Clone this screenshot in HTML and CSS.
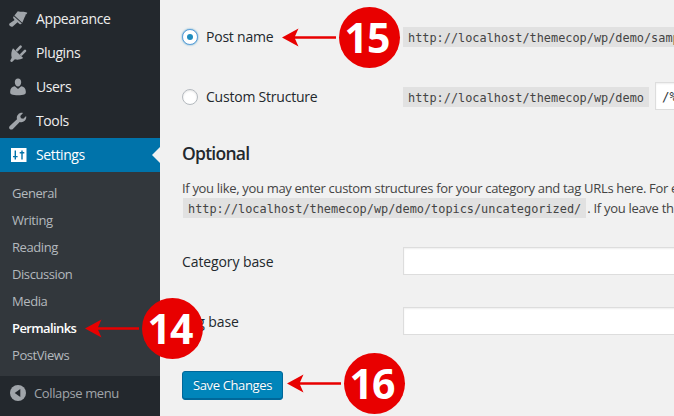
FILE: index.html
```html
<!DOCTYPE html>
<html lang="en">
<head>
<meta charset="utf-8">
<title>Permalink Settings</title>
<link rel="stylesheet" href="styles.css">
</head>
<body>
<div class="admin">
  <aside class="sidebar">
    <nav class="menu">
      <a class="item"><svg viewBox="0 0 20 20"><path d="M1.5 14.6 6.6 11 5.5 9.4c-.7-.9-.3-1.6.3-2.1l8 7.3c-.8.7-1.5.9-2.3.3l-2-1.6-4.7 4.1c-1.8 1.3-4.6-1.1-3.3-2.8z"/><path d="M6.4 6.4 9.8 2.2c3.1 1 6.1-.4 9.5 1.6-.3 1.1-.9 1.7-2 1.9.4.8.2 1.4-.5 2l-2.5 6z"/></svg><span>Appearance</span></a>
      <a class="item"><svg viewBox="0 0 20 20"><path d="M5 5.2 15.2 15c-2.7 1.7-6 2-8.3 1.3l-2.6 2.4c-1.2.8-2.6-.8-1.8-1.8l1.2-2.1C2.9 11.5 3.3 8 5 5.2z"/><path class="prong" d="m9 7.4 3.6-3.7M13.3 11.6l3.7-3.7"/></svg><span>Plugins</span></a>
      <a class="item"><svg viewBox="0 0 20 20"><path d="M10 1.6c2 0 3.3 1.5 3.2 3.6C13.1 7.5 11.8 9.5 10 9.5S6.9 7.5 6.8 5.2C6.7 3.1 8 1.6 10 1.6z"/><path d="M6.8 9.3 10 12l3.2-2.7c2.7.4 4.4 2 4.6 5 .1 1.8-.1 2.5-1 2.9-3.6 1.4-10 1.4-13.6 0-.9-.4-1.1-1.1-1-2.9.2-3 1.9-4.6 4.6-5z"/></svg><span>Users</span></a>
      <a class="item"><svg viewBox="0 0 20 20"><path d="M16.7 9.8c-1.4 1.3-3.2 1.7-5 1.1l-6.8 7c-.9 1-2.3.9-3.2.1-.8-.9-.8-2.2.1-3.1l7.2-6.6c-.5-1.8-.2-3.6 1.2-4.9 1.3-1.4 3-1.8 4.8-1.4l-2.7 2.9.6 2.3 2.4.6 2.8-2.7c.5 1.7-.1 3.4-1.4 4.7z"/></svg><span>Tools</span></a>
      <a class="item current"><svg viewBox="0 0 20 20"><path d="M3 3h15.5v14H3z"/><path class="knob" d="M7.3 5.5v9M14 5.5v9M5 11.6h4.6M11.7 7.8h4.6"/></svg><span>Settings</span></a>
    </nav>
    <div class="submenu">
      <a>General</a><a>Writing</a><a>Reading</a><a>Discussion</a><a>Media</a><a class="active">Permalinks</a><a>PostViews</a>
    </div>
    <a class="collapse"><svg viewBox="0 0 16 16"><circle cx="8" cy="8" r="8"/><path d="M10.3 4v8L4.7 8z"/></svg><span>Collapse menu</span></a>
  </aside>

  <main class="content">
    <div class="row row-name">
      <label><i class="radio checked"></i><span>Post name</span></label>
      <code>http://localhost/themecop/wp/demo/sample-post/</code>
    </div>
    <div class="row row-custom">
      <label><i class="radio"></i><span>Custom Structure</span></label>
      <code>http://localhost/themecop/wp/demo</code>
      <div class="field structure">/%postname%/</div>
    </div>
    <h2>Optional</h2>
    <p><span class="line1">If you like, you may enter custom structures for your category and tag URLs here. For example,</span><br><code>http://localhost/themecop/wp/demo/topics/uncategorized/</code><span class="line2"> . If you leave these blank</span></p>
    <div class="row row-base"><label>Category base</label><div class="field"></div></div>
    <div class="row row-base"><label>Tag base</label><div class="field"></div></div>
    <button class="save"><span>Save Changes</span></button>
  </main>

  <div class="callout step15"><svg viewBox="0 0 54 20"><path d="M0 9.5 16.5.5 13 8.2h41v2.6H13l3.5 7.7z"/></svg><b>15</b></div>
  <div class="callout step14"><svg viewBox="0 0 54 20"><path d="M0 9.5 16.5.5 13 8.2h41v2.6H13l3.5 7.7z"/></svg><b>14</b></div>
  <div class="callout step16"><svg viewBox="0 0 54 20"><path d="M0 9.5 16.5.5 13 8.2h41v2.6H13l3.5 7.7z"/></svg><b>16</b></div>
</div>
</body>
</html>
```
FILE: styles.css
```css
* { box-sizing: border-box; }
body { margin: 0; background: #f1f1f1; color: #444; font: 13px/20px "Open Sans", "Noto Sans", sans-serif; }
.admin { position: relative; display: flex; width: 674px; height: 416px; overflow: hidden; }
.sidebar { flex: none; width: 160px; background: #23282d; color: #b4b9be; }
.menu { padding-top: 2px; }
.item { display: flex; align-items: center; gap: 8px; height: 34px; padding-left: 8px; color: #eee; font-size: 14px; line-height: 18px; letter-spacing: -.38px; }
.item svg { width: 20px; height: 20px; fill: #a0a5aa; }
.item .prong { fill: none; stroke: #a0a5aa; stroke-width: 2.6; stroke-linecap: round; }
.current { position: relative; background: #0073aa; color: #fff; }
.current svg { fill: #fff; }
.current .knob { fill: none; stroke: #0073aa; stroke-width: 1.4; }
.current::after { content: ""; position: absolute; right: 0; top: 9px; border: 8px solid transparent; border-left: 0; border-right-color: #f1f1f1; }
.submenu { height: 204px; padding: 8px 12px 0; background: #32373c; }
.submenu a { display: block; height: 27px; line-height: 27px; letter-spacing: -.42px; }
.submenu .active { color: #fff; font-weight: 600; letter-spacing: -.6px; }
.collapse { display: flex; align-items: center; gap: 8px; height: 34px; padding-left: 10px; color: #a0a5aa; letter-spacing: -.38px; }
.collapse svg { width: 16px; height: 16px; fill: #a0a5aa; }
.collapse path { fill: #23282d; }

.content { flex: none; width: 800px; padding: 22px 0 0 22px; }
.row { display: flex; align-items: center; height: 30px; color: #23282d; font-size: 14px; }
.row label { display: flex; align-items: center; flex: none; width: 221px; font-weight: 500; letter-spacing: -.22px; }
.row-base label { padding-top: 2px; letter-spacing: -.1px; }
.row-name { margin-bottom: 30px; }
.row-name code { margin-top: -1px; }
.radio { flex: none; width: 16px; height: 16px; margin-right: 8px; border: 1px solid #b4b9be; border-radius: 50%; background: #fff; box-shadow: inset 0 1px 2px rgba(0,0,0,.1); }
.checked { display: grid; place-items: center; border-color: #5b9dd9; box-shadow: 0 0 2px rgba(30,140,190,.8); }
.checked::before { content: ""; width: 6px; height: 6px; border-radius: 50%; background: #1e8cbe; }
code { display: inline-block; height: 20px; padding: 0 5px; background: #e1e1e1; color: #444; font: 11.88px/22px "DejaVu Sans Mono", monospace; white-space: nowrap; }
.field { flex: none; width: 400px; height: 28px; border: 1px solid #ddd; background: #fff; box-shadow: inset 0 1px 2px rgba(0,0,0,.07); }
.structure { margin-left: 6px; margin-top: -2px; padding: 3px 6px; color: #32373c; font: 12.5px/22px "DejaVu Sans Mono", monospace; }
h2 { margin: 29px 0 13px; color: #23282d; font-size: 17.5px; font-weight: 600; line-height: 24px; letter-spacing: -.75px; }
p { margin: 0 0 28px; white-space: nowrap; line-height: 20px; }
.line1 { letter-spacing: -.32px; }
.line2 { letter-spacing: -.3px; margin-left: -2px; }
p code { margin-left: 1px; vertical-align: top; }
.row-base { margin-bottom: 30px; }
.save { display: block; width: 101px; height: 29px; margin-top: 35px; padding: 0 0 1px; border: 1px solid #006799; border-radius: 3px; background: #0085ba; box-shadow: inset 0 -1px #006799; color: #fff; font: 13px/26px "Open Sans", sans-serif; letter-spacing: -.35px; white-space: nowrap; text-shadow: 0 -1px 1px #006799; }
.callout { position: absolute; display: flex; align-items: center; gap: 3px; height: 61px; }
.callout svg { width: 54px; height: 20px; fill: #e80000; }
.callout b { width: 61px; height: 61px; padding-right: 5px; border-radius: 50%; background: #e80000; color: #fff; font: 700 41px/61px "Open Sans", sans-serif; letter-spacing: -1px; text-align: center; }
.step15 { left: 282px; top: 7px; }
.step14 { left: 85px; top: 298px; }
.step16 { left: 287px; top: 353px; }
```
